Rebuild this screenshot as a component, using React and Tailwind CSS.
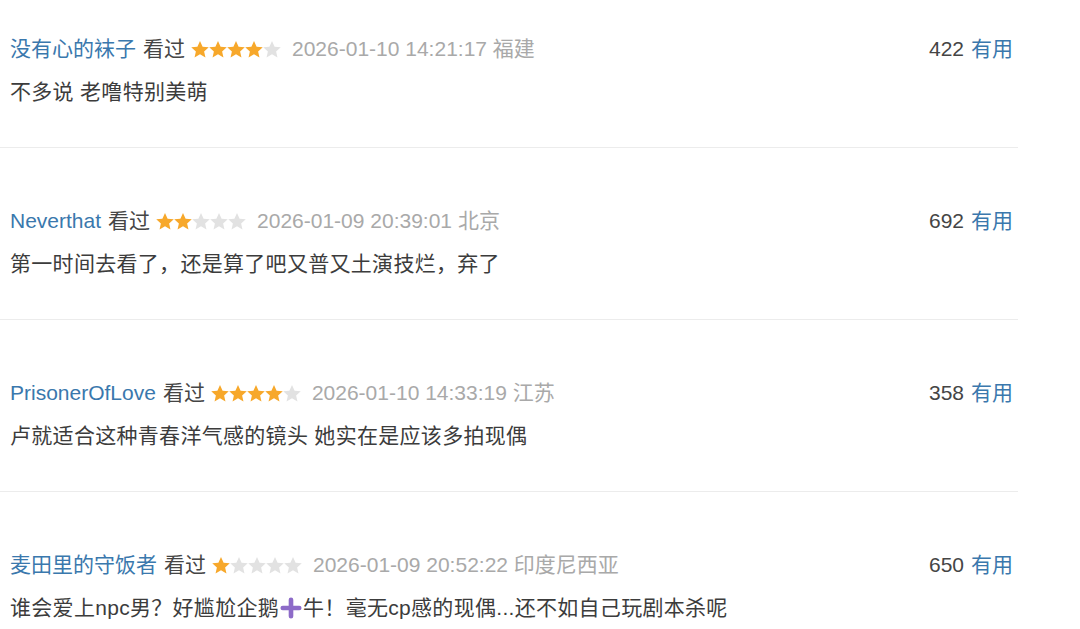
const reviews = [
  { name: '没有心的袜子', stars: 4, time: '2026-01-10 14:21:17', place: '福建', votes: 422, text: '不多说 老噜特别美萌' },
  { name: 'Neverthat', stars: 2, time: '2026-01-09 20:39:01', place: '北京', votes: 692, text: '第一时间去看了，还是算了吧又普又土演技烂，弃了' },
  { name: 'PrisonerOfLove', stars: 4, time: '2026-01-10 14:33:19', place: '江苏', votes: 358, text: '卢就适合这种青春洋气感的镜头 她实在是应该多拍现偶' },
  { name: '麦田里的守饭者', stars: 1, time: '2026-01-09 20:52:22', place: '印度尼西亚', votes: 650, text: null },
];

function Star({ on }) {
  return (
    <svg viewBox="2 2.2 20 19" className="w-[18px] h-[17px]">
      <path
        d="M12 2.2l2.9 6.3 6.9.7-5.2 4.6 1.5 6.8L12 17.1 5.9 20.6l1.5-6.8L2.2 9.2l6.9-.7z"
        fill={on ? '#f7a82b' : '#e2e2e2'}
      />
    </svg>
  );
}

function Plus() {
  return (
    <svg viewBox="0 0 20 20" className="inline-block w-[22px] h-[22px] align-[-4px] mx-[1px]">
      <path d="M10 2.5v15M2.5 10h15" stroke="#8d6bc8" strokeWidth="4.2" strokeLinecap="round" />
    </svg>
  );
}

export default function App() {
  return (
    <div className="w-[1080px] h-[629px] overflow-hidden bg-white font-['Liberation_Sans','Noto_Sans_CJK_SC',sans-serif] text-[21px]">
      <div className="w-[1018px]">
        {reviews.map((r, i) => (
          <div
            key={i}
            className={`border-b border-[#ececec] pb-[40px] ${i === 0 ? 'pt-[34px]' : 'pt-[58px]'}`}
          >
            <div className="flex items-center h-[30px] pl-[10px] pr-[5px]">
              <span className="text-[#3a78ad]">{r.name}</span>
              <span className="ml-[7px] text-[#454545]">看过</span>
              <span className="ml-[6px] flex items-center">
                {[0, 1, 2, 3, 4].map((s) => (
                  <Star key={s} on={s < r.stars} />
                ))}
              </span>
              <span className="ml-[11px] text-[#a9a9a9]">{r.time} {r.place}</span>
              <span className="ml-auto text-[#454545]">{r.votes}</span>
              <span className="ml-[7px] text-[#3a78ad]">有用</span>
            </div>
            <div className="mt-[13px] h-[30px] leading-[30px] pl-[10px] text-[#3c3c3c] whitespace-nowrap tracking-[0.3px]">
              {r.text ?? (
                <>
                  谁会爱上npc男？好尴尬企鹅<Plus />牛！毫无cp感的现偶...还不如自己玩剧本杀呢
                </>
              )}
            </div>
          </div>
        ))}
      </div>
    </div>
  );
}
